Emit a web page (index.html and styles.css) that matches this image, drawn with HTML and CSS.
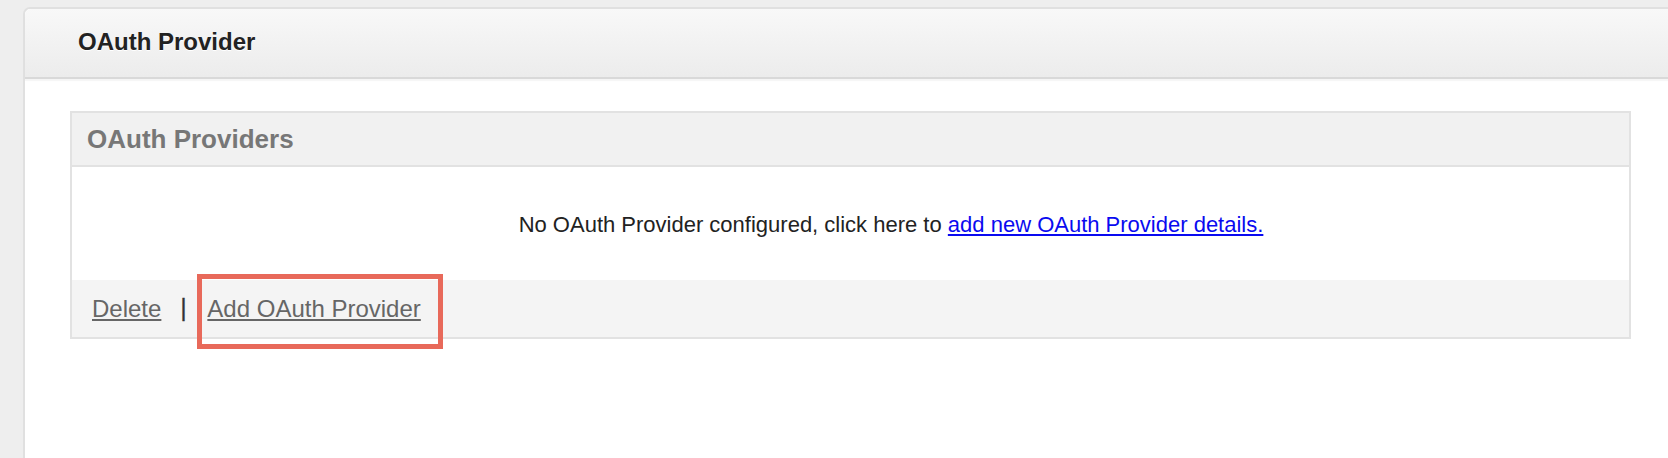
FILE: index.html
```html
<!DOCTYPE html>
<html>
<head>
<meta charset="utf-8">
<title>OAuth Provider</title>
<link rel="stylesheet" href="styles.css">
</head>
<body>
<div class="page">
  <div class="card">
    <div class="card-header">
      <h1 class="card-title">OAuth Provider</h1>
    </div>
    <div class="card-body">
      <div class="panel">
        <div class="panel-header">
          <h2 class="panel-title">OAuth Providers</h2>
        </div>
        <div class="panel-body">
          <p class="empty-msg">No OAuth Provider configured, click here to <a href="#" class="blue-link">add new OAuth Provider details.</a></p>
        </div>
        <div class="panel-footer">
          <a href="#" class="foot-link">Delete</a>
          <span class="sep">|</span>
          <span class="highlight"><a href="#" class="foot-link">Add OAuth Provider</a></span>
        </div>
      </div>
    </div>
  </div>
</div>
</body>
</html>
```

FILE: styles.css
```css
html, body {
  margin: 0;
  padding: 0;
}
body {
  background: #eeeeee;
  font-family: "Liberation Sans", Arial, sans-serif;
  height: 458px;
  overflow: hidden;
}
.page {
  padding: 7px 0 0 23px;
}
.card {
  background: #ffffff;
  border: 2px solid #e0e0e0;
  border-right: none;
  border-bottom: none;
  border-radius: 7px 0 0 0;
  margin-right: -40px;
  height: 449px;
}
.card-header {
  height: 68px;
  background: linear-gradient(#f8f8f8, #ececec);
  border-bottom: 2px solid #d9d9d9;
  box-shadow: 0 2px 1px rgba(0,0,0,0.04);
  border-radius: 6px 0 0 0;
  display: flex;
  align-items: center;
  padding-left: 53px;
}
.card-title {
  margin: 0;
  font-size: 24px;
  font-weight: bold;
  color: #222;
  text-shadow: 0 1px 0 #fff;
  position: relative;
  top: -1px;
}
.card-body {
  padding: 32px 0 0 45px;
}
.panel {
  width: 1557px;
  border: 2px solid #e2e2e2;
}
.panel-header {
  height: 52px;
  background: #f1f1f1;
  border-bottom: 2px solid #e2e2e2;
  display: flex;
  align-items: center;
  padding-left: 15px;
}
.panel-title {
  margin: 0;
  font-size: 26px;
  font-weight: bold;
  color: #777;
}
.panel-body {
  height: 113px;
  display: flex;
  align-items: center;
  justify-content: center;
  padding-left: 81px;
}
.empty-msg {
  margin: 0;
  font-size: 22px;
  color: #222;
  position: relative;
  top: 1px;
}
.blue-link {
  color: #0a0af0;
}
.panel-footer {
  height: 57px;
  background: #f4f4f4;
  display: flex;
  align-items: center;
  padding-left: 20px;
}
.foot-link {
  font-size: 24px;
  color: #666;
}
.sep {
  font-size: 23px;
  color: #333;
  margin: 0 21px 0 19px;
  -webkit-text-stroke: 0.4px #333;
}
.highlight {
  position: relative;
}
.highlight::after {
  content: "";
  position: absolute;
  left: -10px;
  right: -22px;
  top: -21px;
  bottom: -26px;
  border: 5px solid #e8695a;
}
```
